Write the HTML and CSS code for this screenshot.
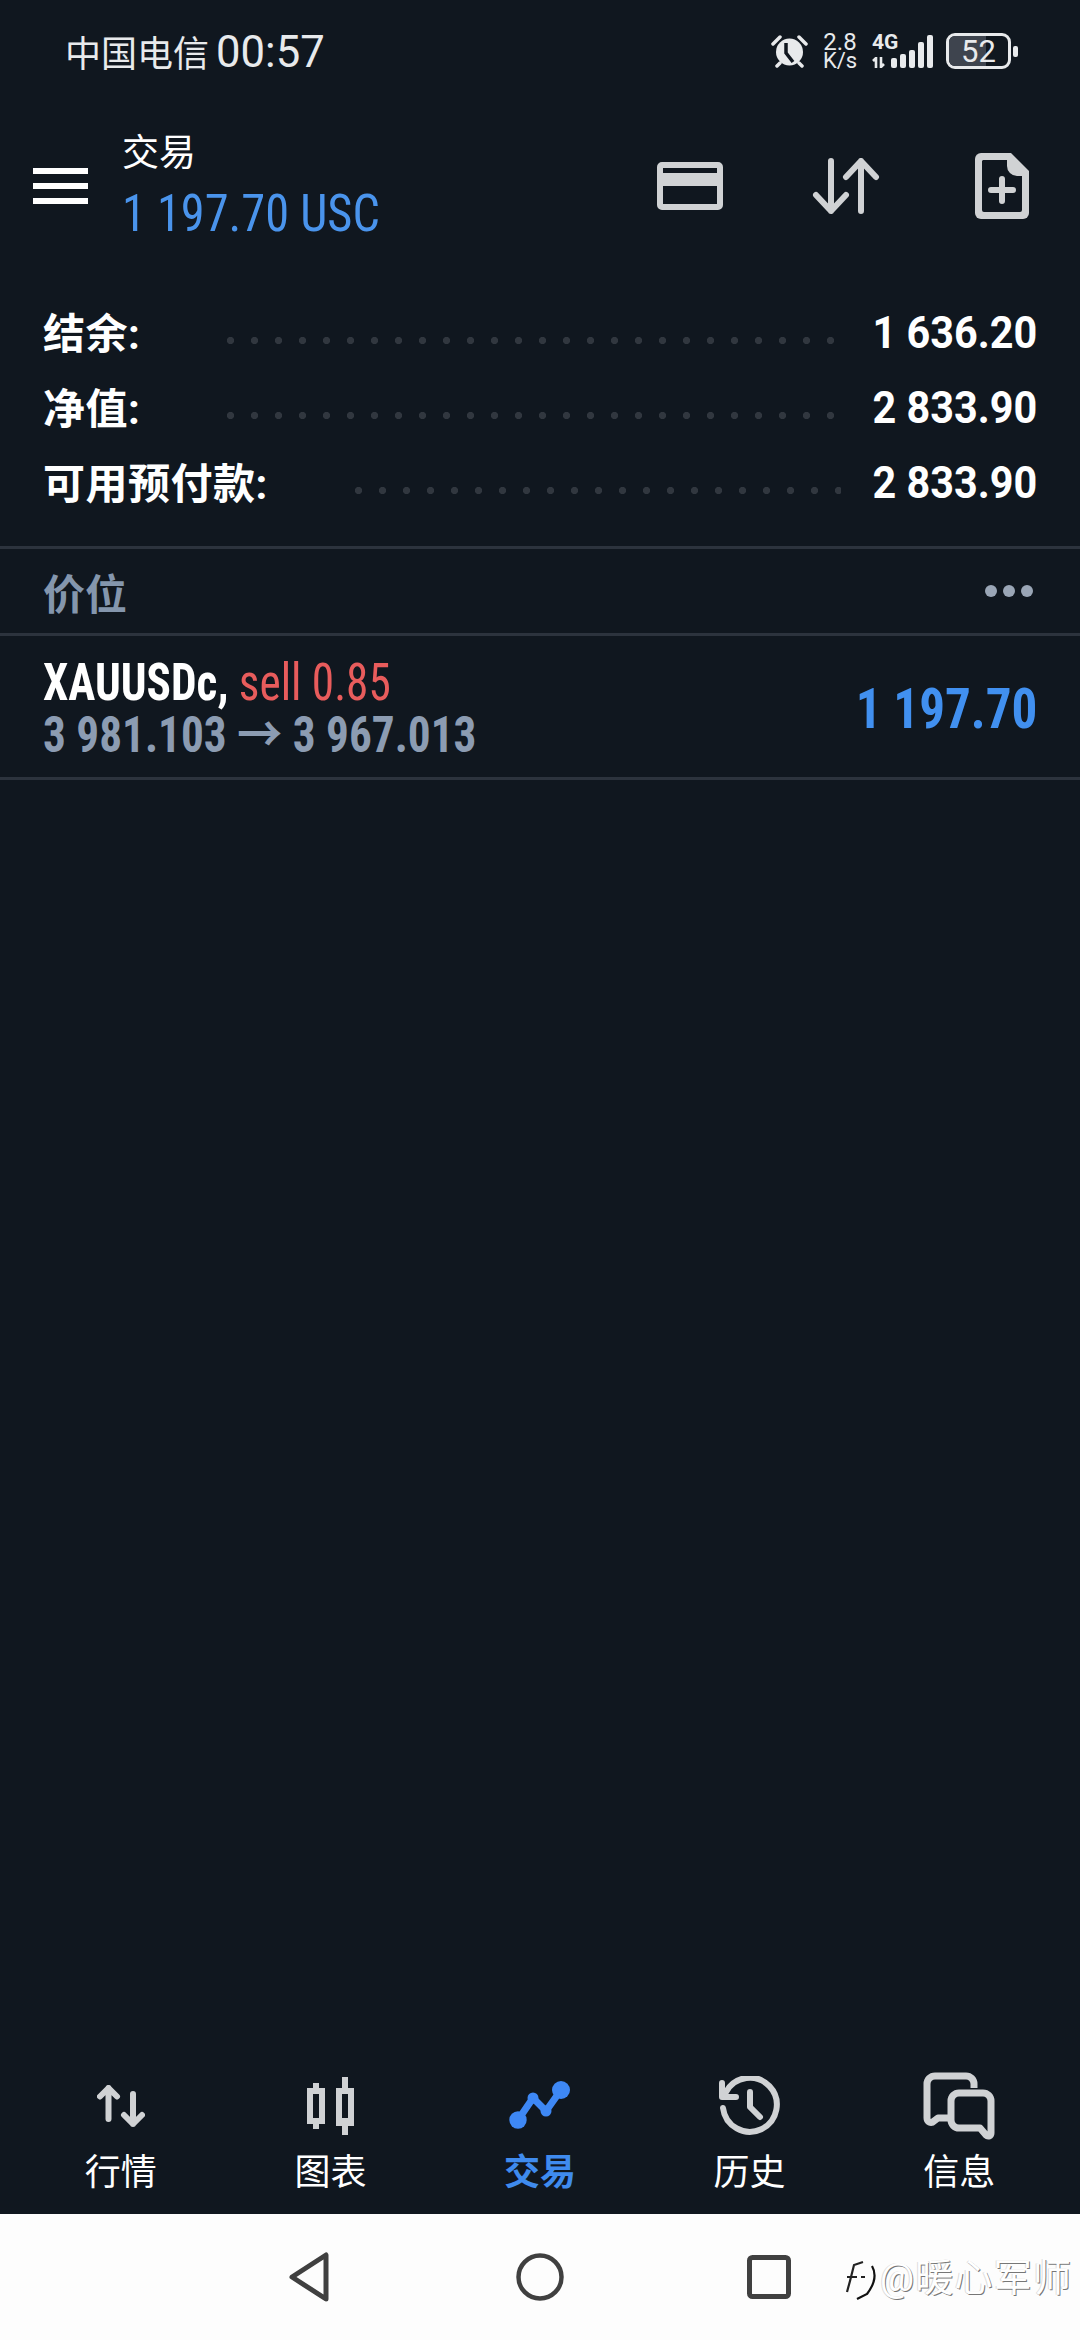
FILE: index.html
```html
<html>
  <head>
    <title>trade</title>
    <link rel="stylesheet" href="styles.css">
  </head>
  <body>
    <div class="screen">
      <div class="status">
        <div class="carrier"><span class="carrier-cn">中国电信</span> <span class="clock">00:57</span></div>
        <div class="status-icons">
          <svg class="alarm" width="37" height="34" viewBox="0 0 37 34">
            <circle cx="18.5" cy="18" r="13.5" fill="#e8eaec"/>
            <path d="M15 9v10l7 9" fill="none" stroke="#10171f" stroke-width="3.5"/>
            <path d="M2 10 9 3M35 10l-7-7M6 32l3-3M31 32l-3-3" fill="none" stroke="#e8eaec" stroke-width="3.5" stroke-linecap="round"/>
          </svg>
          <div class="speed"><span class="speed-num">2.8</span><span class="speed-unit">K/s</span></div>
          <div class="net">
            <span class="net-4g">4G</span>
            <svg width="13" height="11" viewBox="0 0 13 11">
              <path d="M4 11V1L1 4M9 0v10l3-3" fill="none" stroke="#e8eaec" stroke-width="2.6"/>
            </svg>
          </div>
          <div class="signal">
            <i class="b1"></i><i class="b2"></i><i class="b3"></i><i class="b4"></i><i class="b5"></i>
          </div>
          <div class="battery"><div class="battery-fill"></div><span class="battery-num">52</span></div>
          <div class="battery-tip"></div>
        </div>
      </div>

      <div class="topbar">
        <div class="burger"><i></i><i></i><i></i></div>
        <div class="title">
          <div class="title-cn">交易</div>
          <div class="title-value"><span class="narrow">1 197.70 USC</span></div>
        </div>
        <div class="top-actions">
          <svg width="66" height="48" viewBox="0 0 66 48">
            <rect x="3" y="3" width="60" height="42" rx="2" fill="none" stroke="#d0d2d4" stroke-width="6"/>
            <rect x="3" y="11" width="60" height="13" fill="#d0d2d4"/>
          </svg>
          <svg class="act-swap" width="68" height="56" viewBox="0 0 68 56">
            <path d="M19 3v50M4 37l15 16 15-16M49 53V3M34 19 49 3l15 16" fill="none" stroke="#d0d2d4" stroke-width="6" stroke-linecap="round" stroke-linejoin="round"/>
          </svg>
          <svg width="54" height="66" viewBox="0 0 54 66">
            <path d="M6 0h30l18 18v42a6 6 0 0 1-6 6H6a6 6 0 0 1-6-6V6a6 6 0 0 1 6-6z" fill="#d0d2d4"/>
            <path d="M8 7h24v6a10 10 0 0 0 10 10h5v34a2 2 0 0 1-2 2H9a2 2 0 0 1-2-2V8z" fill="#10171f"/>
            <path d="M27 26v22M16 37h22" fill="none" stroke="#d0d2d4" stroke-width="6" stroke-linecap="round"/>
          </svg>
        </div>
      </div>

      <div class="summary">
        <div class="sum-row">
          <span class="sum-label">结余:</span>
          <span class="leader"></span>
          <span class="sum-value"><span class="sum-num">1 636.20</span></span>
        </div>
        <div class="sum-row">
          <span class="sum-label">净值:</span>
          <span class="leader"></span>
          <span class="sum-value"><span class="sum-num">2 833.90</span></span>
        </div>
        <div class="sum-row">
          <span class="sum-label">可用预付款:</span>
          <span class="leader"></span>
          <span class="sum-value"><span class="sum-num">2 833.90</span></span>
        </div>
      </div>

      <div class="section-head">
        <span class="section-title">价位</span>
        <div class="more"><i></i><i></i><i></i></div>
      </div>

      <div class="position">
        <div class="pos-left">
          <div class="pos-line1"><span class="narrow"><b>XAUUSDc,</b> <span class="sell">sell 0.85</span></span></div>
          <div class="pos-line2"><span class="narrow">3 981.103 → 3 967.013</span></div>
        </div>
        <div class="pos-profit"><span class="narrow">1 197.70</span></div>
      </div>

      <div class="spacer"></div>

      <div class="tabs">
        <div class="tab">
          <div class="tab-icon">
            <svg width="48" height="42" viewBox="0 0 48 42">
              <path d="M11.5 34V3M3 11.5 11.5 3 20 11.5M36 9v30M27 30l9 9 9-9" fill="none" stroke="#d0d2d4" stroke-width="6" stroke-linecap="round" stroke-linejoin="round"/>
            </svg>
          </div>
          <span>行情</span>
        </div>
        <div class="tab">
          <div class="tab-icon">
            <svg width="47" height="58" viewBox="0 0 47 58">
              <path d="M6 6h6v5h6v36h-6v5H6v-5H0V11h6zM6 17v24h6V17zM35 0h6v11h6v38h-6v9h-6v-9h-6V11h6zM35 17v24h6V17z" fill="#d0d2d4" fill-rule="evenodd"/>
            </svg>
          </div>
          <span>图表</span>
        </div>
        <div class="tab tab-active">
          <div class="tab-icon">
            <svg width="62" height="50" viewBox="0 0 62 50">
              <path d="M9 39 24 17l13 13L52 9" fill="none" stroke="#3e88f5" stroke-width="7" stroke-linejoin="round"/>
              <circle cx="9" cy="39" r="8.7" fill="#3e88f5"/>
              <circle cx="24" cy="17" r="5.5" fill="#3e88f5"/>
              <circle cx="37" cy="30" r="5.5" fill="#3e88f5"/>
              <circle cx="52" cy="9" r="9" fill="#3e88f5"/>
            </svg>
          </div>
          <span>交易</span>
        </div>
        <div class="tab">
          <div class="tab-icon">
            <svg width="62" height="60" viewBox="0 0 62 60">
              <path d="M7 16A27 27 0 1 1 4 32" fill="none" stroke="#d0d2d4" stroke-width="6" stroke-linecap="round"/>
              <path d="M3 7v14h14" fill="none" stroke="#d0d2d4" stroke-width="6" stroke-linecap="round" stroke-linejoin="round"/>
              <path d="M31 16v15l10 10" fill="none" stroke="#d0d2d4" stroke-width="6" stroke-linecap="round" stroke-linejoin="round"/>
            </svg>
          </div>
          <span>历史</span>
        </div>
        <div class="tab">
          <div class="tab-icon">
            <svg width="72" height="68" viewBox="0 0 72 68">
              <path d="M51 16v-4a8 8 0 0 0-8-8H12a8 8 0 0 0-8 8v34c0 4 4 6 7 3l4-3h14" fill="none" stroke="#d0d2d4" stroke-width="7" stroke-linejoin="round"/>
              <path d="M36 21h24a8 8 0 0 1 8 8v32c0 3-3 4-5 2l-6-7H36a8 8 0 0 1-8-8V29a8 8 0 0 1 8-8z" fill="none" stroke="#d0d2d4" stroke-width="7" stroke-linejoin="round"/>
            </svg>
          </div>
          <span>信息</span>
        </div>
      </div>

      <div class="sysnav">
        <svg width="42" height="50" viewBox="0 0 42 50">
          <path d="M38 3v44L4 25z" fill="none" stroke="#404040" stroke-width="5" stroke-linejoin="round"/>
        </svg>
        <svg class="nav-home" width="48" height="48" viewBox="0 0 48 48">
          <circle cx="24" cy="24" r="21.5" fill="none" stroke="#404040" stroke-width="4.5"/>
        </svg>
        <svg width="44" height="44" viewBox="0 0 44 44">
          <rect x="2.5" y="2.5" width="39" height="39" rx="3" fill="none" stroke="#404040" stroke-width="5"/>
        </svg>
      </div>
      <div class="watermark">
        <svg class="wm-logo" width="38" height="42" viewBox="0 0 38 42">
          <path d="M23 3 14 6 10 22 7 33M7 18h10M21 18h4" fill="none" stroke="#222" stroke-width="2.2"/>
          <path d="M32 7c4 7 4 16-5 28l-10 5" fill="none" stroke="#111" stroke-width="2.2"/>
        </svg>
        <span class="wm-text">@暖心军师</span>
      </div>
    </div>
  </body>
</html>
```
FILE: styles.css
```css
* {
  box-sizing: border-box;
}
html,
body {
  margin: 0;
  padding: 0;
}
body {
  width: 1080px;
  height: 2340px;
  overflow: hidden;
  background: #10171f;
  font-family: Roboto, "Noto Sans CJK SC", sans-serif;
  color: #fff;
}
.screen {
  position: relative;
  width: 1080px;
  height: 2340px;
  display: flex;
  flex-direction: column;
}
.narrow {
  display: inline-block;
  white-space: nowrap;
  font-stretch: 75%;
  transform-origin: left center;
}
i {
  display: block;
}

/* status bar */
.status {
  height: 102px;
  padding: 26px 62px 0 65px;
  display: flex;
  justify-content: space-between;
  align-items: flex-start;
  flex: none;
}
.carrier {
  display: flex;
  align-items: center;
  gap: 7px;
  height: 50px;
  color: #e8eaec;
}
.carrier-cn {
  font-size: 36px;
}
.clock {
  font-size: 45px;
  display: inline-block;
  transform: scaleX(0.97);
  transform-origin: left center;
}
.status-icons {
  display: flex;
  align-items: center;
  height: 50px;
}
.alarm {
  margin-right: 16px;
}
.speed {
  display: flex;
  flex-direction: column;
  align-items: center;
  width: 32px;
  color: #e8eaec;
  margin-right: 16px;
}
.speed-num {
  font-size: 24px;
  line-height: 19px;
}
.speed-unit {
  font-size: 22px;
  line-height: 18px;
}
.net {
  display: flex;
  flex-direction: column;
  gap: 6px;
  width: 19px;
  color: #e8eaec;
}
.net-4g {
  font-size: 21px;
  line-height: 17px;
  font-weight: 700;
  white-space: nowrap;
}
.signal {
  display: flex;
  align-items: flex-end;
  gap: 3px;
  height: 34px;
  margin-right: 13px;
}
.signal i {
  width: 6px;
  background: #e8eaec;
  border-radius: 2px;
}
.b1 {
  height: 10px;
}
.b2 {
  height: 14px;
}
.b3 {
  height: 18px;
}
.b4 {
  height: 26px;
}
.b5 {
  height: 33px;
}
.battery {
  position: relative;
  width: 65px;
  height: 36px;
  border: 3px solid #e8eaec;
  border-radius: 9px;
  overflow: hidden;
  display: flex;
  align-items: center;
  justify-content: center;
}
.battery-fill {
  position: absolute;
  left: 0;
  top: 0;
  bottom: 0;
  width: 62%;
  background: #3e444e;
}
.battery-num {
  position: relative;
  font-size: 31px;
  color: #e8eaec;
}
.battery-tip {
  width: 5px;
  height: 11px;
  margin-left: 2px;
  background: #e8eaec;
  border-radius: 2px;
}

/* title row */
.topbar {
  display: flex;
  align-items: center;
  height: 162px;
  padding: 6px 51px 0 33px;
  flex: none;
}
.burger {
  display: flex;
  flex-direction: column;
  gap: 9px;
  width: 55px;
  margin-right: 34px;
}
.burger i {
  height: 6px;
  background: #fff;
}
.title {
  flex: 1;
  margin-top: 4px;
}
.title-cn {
  font-size: 37px;
  line-height: 48px;
}
.title-value {
  margin-top: 4px;
  font-size: 52px;
  line-height: 64px;
  color: #4a94ec;
}
.title-value .narrow {
  transform: scaleX(0.93);
}
.top-actions {
  display: flex;
  align-items: center;
}
.act-swap {
  margin: 0 95px 0 89px;
}

/* balance rows */
.summary {
  padding: 30px 43px 0 43px;
  height: 285px;
  flex: none;
  border-bottom: 3px solid #2c333d;
}
.sum-row {
  display: flex;
  align-items: center;
  height: 75px;
}
.sum-label {
  padding-bottom: 2px;
  font-size: 42px;
  font-weight: 700;
  letter-spacing: 0.5px;
}
.leader {
  flex: 1;
  height: 7px;
  margin: 18px 34px 0 87px;
  background: radial-gradient(circle at 3.5px 3.5px, #31373f 3.4px, transparent 3.8px) left center / 24px 7px repeat-x;
}
.sum-value {
  display: flex;
  justify-content: flex-end;
  width: 162px;
  padding-top: 2px;
  font-size: 44px;
  font-weight: 700;
}
.sum-num {
  flex: none;
  white-space: nowrap;
  transform: scaleX(0.94);
  transform-origin: right center;
}

/* section head */
.section-head {
  display: flex;
  align-items: center;
  justify-content: space-between;
  height: 87px;
  padding: 0 47px 0 43px;
  flex: none;
  border-bottom: 3px solid #2c333d;
}
.section-title {
  font-size: 42px;
  font-weight: 700;
  color: #8496ad;
}
.more {
  display: flex;
  gap: 6px;
}
.more i {
  width: 12px;
  height: 12px;
  border-radius: 50%;
  background: #9aa6b6;
}

/* open position */
.position {
  display: flex;
  align-items: center;
  justify-content: space-between;
  height: 144px;
  padding: 4px 43px 0 43px;
  flex: none;
  border-bottom: 3px solid #2c333d;
}
.pos-line1 {
  font-size: 52px;
  line-height: 52px;
}
.pos-line1 .narrow {
  transform: scaleX(0.87);
}
.pos-line1 b {
  font-weight: 700;
}
.sell {
  color: #e85c5c;
}
.pos-line2 {
  font-size: 50px;
  line-height: 52px;
  font-weight: 700;
  color: #8c9cb2;
}
.pos-line2 .narrow {
  transform: scaleX(0.905);
}
.pos-profit {
  display: flex;
  justify-content: flex-end;
  width: 178px;
  font-size: 55px;
  font-weight: 700;
  color: #4190f0;
}
.pos-profit .narrow {
  flex: none;
  transform: scaleX(0.93);
  transform-origin: right center;
}

.spacer {
  flex: 1;
}

/* bottom tabs */
.tabs {
  display: flex;
  height: 150px;
  padding: 0 16px;
  flex: none;
}
.tab {
  flex: 1;
  display: flex;
  flex-direction: column;
  align-items: center;
  font-size: 36px;
  line-height: 44px;
  color: #fff;
}
.tab-icon {
  height: 84px;
  margin-bottom: 3px;
  display: flex;
  align-items: center;
  justify-content: center;
}
.tab-active {
  color: #3f8bee;
  font-weight: 700;
}

/* android nav */
.sysnav {
  height: 126px;
  flex: none;
  background: #fdfdfd;
  display: flex;
  align-items: center;
  padding-left: 288px;
}
.nav-home {
  margin: 0 183px 0 186px;
}
.watermark {
  position: absolute;
  left: 840px;
  top: 2259px;
  display: flex;
  align-items: flex-start;
  font-size: 38px;
  line-height: 38px;
  color: #fff;
  white-space: nowrap;
  text-shadow: 1px 1px 0 #777, -1px 0 0 #ddd;
}
.wm-text {
  margin-left: 2px;
  letter-spacing: 1.2px;
}
```
